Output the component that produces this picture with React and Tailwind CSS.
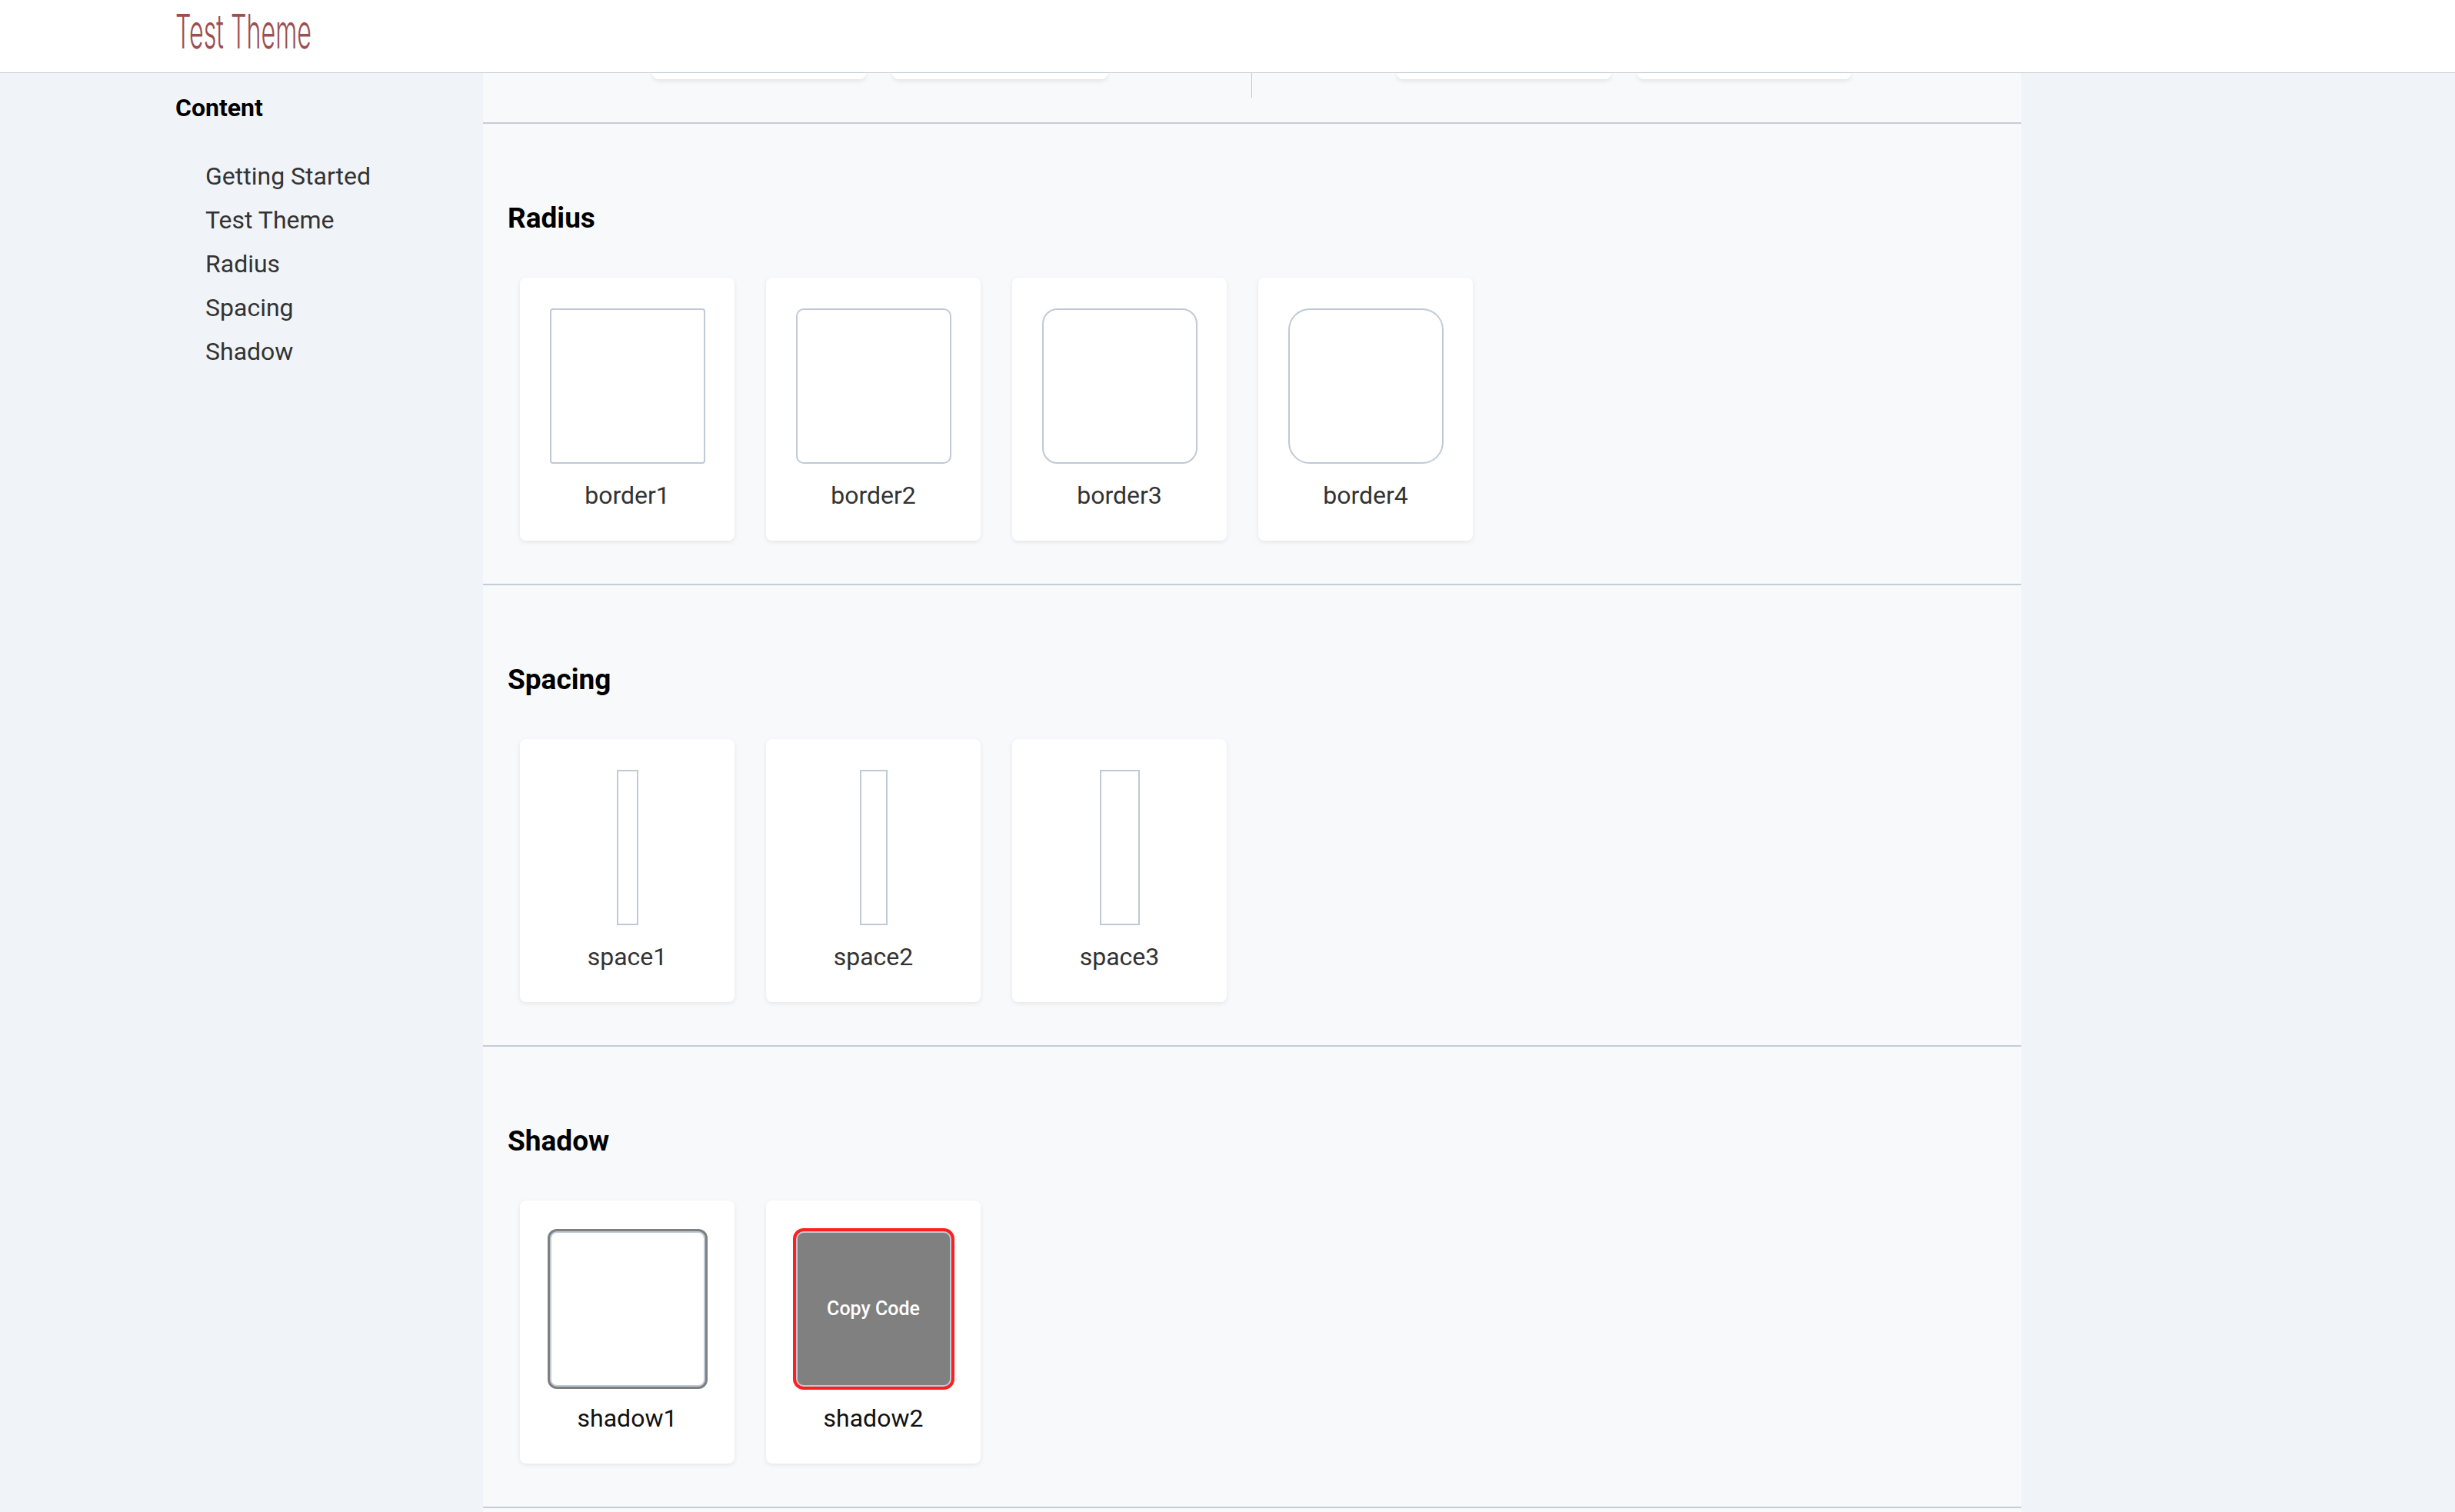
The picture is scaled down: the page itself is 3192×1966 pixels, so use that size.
import React from 'react';

const navItems = ['Getting Started', 'Test Theme', 'Radius', 'Spacing', 'Shadow'];

const radiusItems = [
    { name: 'border1', box: 'rounded-[4px]' },
    { name: 'border2', box: 'rounded-[10px]' },
    { name: 'border3', box: 'rounded-[20px]' },
    { name: 'border4', box: 'rounded-[28px]' },
];

const spacingItems = [
    { name: 'space1', box: 'w-[28px]' },
    { name: 'space2', box: 'w-[36px]' },
    { name: 'space3', box: 'w-[52px]' },
];

const Card = ({ label, labelColor = 'text-[#333]', children }) => (
    <div className="w-[279px] h-[342px] bg-white rounded-[8px] shadow-[0_2px_6px_rgba(0,0,0,0.08)] flex flex-col items-center pt-[40px]">
        <div className="h-[202px] flex items-center justify-center">{children}</div>
        <p className={`mt-[21px] text-[32px] leading-[40px] ${labelColor}`}>{label}</p>
    </div>
);

const Section = ({ title, children }) => (
    <section className="border-b-2 border-[#c3cdd8]">
        <div className="pt-[102px] pb-[56px] pl-[32px]">
            <h2 className="text-[37px] leading-[42px] font-bold text-black">{title}</h2>
            <div className="mt-[56px] pl-[16px] flex gap-[41px]">{children}</div>
        </div>
    </section>
);

const App = () => {
    return (
        <div className="min-h-screen bg-[#f0f4f8] font-[Roboto,sans-serif]">
            {/* Header */}
            <header className="h-[95px] bg-white border-b border-[#c3cdd8] pl-[228px] pt-[10px] overflow-hidden">
                <span className="inline-block origin-left scale-x-[0.52] font-[Inter,sans-serif] font-light text-[62px] leading-none text-[#9d4f4f] whitespace-nowrap">
                    Test Theme
                </span>
            </header>

            <div className="flex">
                {/* Sidebar */}
                <aside className="w-[628px] shrink-0 pl-[228px] pt-[25px]">
                    <h3 className="text-[32px] leading-[40px] font-bold text-black">Content</h3>
                    <ul className="mt-[41px] pl-[39px]">
                        {navItems.map((item) => (
                            <li key={item} className="text-[32px] leading-[57px] text-[#333]">
                                {item}
                            </li>
                        ))}
                    </ul>
                </aside>

                {/* Main */}
                <main className="w-[2000px] shrink-0 bg-[#f7f9fb]">
                    {/* tail of the previous section */}
                    <section className="border-b-2 border-[#c3cdd8] h-[66px] flex items-start">
                        <div className="flex gap-[34px] ml-[220px]">
                            <div className="w-[278px] h-[8px] bg-white rounded-b-[8px] shadow-[0_2px_6px_rgba(0,0,0,0.1)]" />
                            <div className="w-[280px] h-[8px] bg-white rounded-b-[8px] shadow-[0_2px_6px_rgba(0,0,0,0.1)]" />
                        </div>
                        <div className="ml-[187px] w-px h-[32px] bg-[#c4c4c4]" />
                        <div className="flex gap-[34px] ml-[188px]">
                            <div className="w-[279px] h-[8px] bg-white rounded-b-[8px] shadow-[0_2px_6px_rgba(0,0,0,0.1)]" />
                            <div className="w-[278px] h-[8px] bg-white rounded-b-[8px] shadow-[0_2px_6px_rgba(0,0,0,0.1)]" />
                        </div>
                    </section>

                    <Section title="Radius">
                        {radiusItems.map((r) => (
                            <Card key={r.name} label={r.name}>
                                <div className={`w-[202px] h-[202px] border-2 border-[#bfcad6] bg-white ${r.box}`} />
                            </Card>
                        ))}
                    </Section>

                    <Section title="Spacing">
                        {spacingItems.map((s) => (
                            <Card key={s.name} label={s.name}>
                                <div className={`h-[202px] border-2 border-[#bfcad6] bg-white ${s.box}`} />
                            </Card>
                        ))}
                    </Section>

                    <Section title="Shadow">
                        <Card label="shadow1" labelColor="text-[#111]">
                            <div className="w-[202px] h-[202px] border-2 border-[#bfcad6] bg-white rounded-[9px] shadow-[0_0_0_3px_#7f7f7f]" />
                        </Card>
                        <Card label="shadow2" labelColor="text-[#111]">
                            <div className="w-[202px] h-[202px] border-2 border-[#bfcad6] bg-[#808080] rounded-[10px] shadow-[0_0_0_4px_#ff1f1f] flex items-center justify-center">
                                <span className="text-white text-[25px] font-medium">Copy Code</span>
                            </div>
                        </Card>
                    </Section>
                    <div className="h-[40px]" />
                </main>
            </div>
        </div>
    );
};

export default App;
